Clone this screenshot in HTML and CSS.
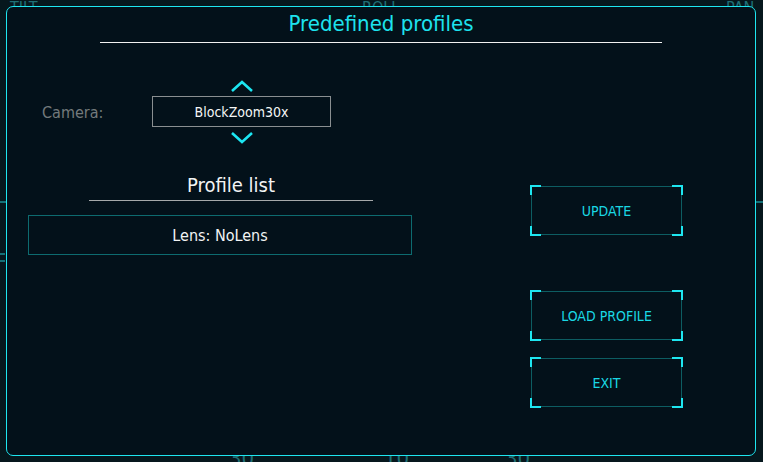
FILE: index.html
```html
<!DOCTYPE html>
<html>
<head>
<meta charset="utf-8">
<link rel="stylesheet" href="styles.css">
</head>
<body>
<div class="hud">
  <span class="hud-text tilt">TILT</span>
  <span class="hud-text roll">ROLL</span>
  <span class="hud-text pan">PAN</span>
  <span class="hud-num n1">30</span>
  <span class="hud-num n2">10</span>
  <span class="hud-num n3">30</span>
  <span class="hud-bar bl1"></span>
  <span class="hud-bar bl2"></span>
  <span class="hud-bar bl3"></span>
  <span class="hud-bar br1"></span>
</div>
<div class="dialog">
  <div class="header">
    <div class="title">Predefined profiles</div>
    <div class="title-rule"></div>
  </div>
  <div class="content">
    <div class="left">
      <div class="camera-row">
        <div class="camera-label">Camera:</div>
        <div class="picker">
          <svg class="chev" width="24" height="12" viewBox="0 0 24 12"><polyline points="2,11 12,2 22,11" fill="none" stroke="#1ce6f2" stroke-width="2.6"/></svg>
          <div class="picker-box">BlockZoom30x</div>
          <svg class="chev" width="24" height="13" viewBox="0 0 24 13"><polyline points="2,2 12,11 22,2" fill="none" stroke="#1ce6f2" stroke-width="2.6"/></svg>
        </div>
      </div>
      <div class="list-head">
        <div class="list-title">Profile list</div>
        <div class="list-rule"></div>
      </div>
      <div class="list-item">Lens: NoLens</div>
    </div>
    <div class="right">
      <div class="btn b-update"><span class="c tl"></span><span class="c tr"></span><span class="c bl"></span><span class="c br"></span>UPDATE</div>
      <div class="btn b-load"><span class="c tl"></span><span class="c tr"></span><span class="c bl"></span><span class="c br"></span>LOAD PROFILE</div>
      <div class="btn b-exit"><span class="c tl"></span><span class="c tr"></span><span class="c bl"></span><span class="c br"></span>EXIT</div>
    </div>
  </div>
</div>
</body>
</html>
```
FILE: styles.css
```css
html, body {
  margin: 0;
  padding: 0;
}
body {
  width: 763px;
  height: 462px;
  overflow: hidden;
  background: #06171d;
  font-family: "DejaVu Sans", sans-serif;
  font-stretch: condensed;
  position: relative;
}
.hud-text, .hud-num {
  position: absolute;
  color: #1f6f75;
  font-size: 16px;
  line-height: 16px;
}
.tilt { left: 10px; top: 0; }
.roll { left: 362px; top: 0; }
.pan { left: 726px; top: 0; }
.hud-num { font-size: 22px; line-height: 22px; top: 448px; }
.n1 { left: 229px; }
.n2 { left: 384px; }
.n3 { left: 505px; }
.hud-bar {
  position: absolute;
  background: #157077;
  height: 2px;
}
.bl1 { left: 0; width: 6px; top: 201px; }
.bl2 { left: 0; width: 5px; top: 253px; }
.bl3 { left: 0; width: 5px; top: 260px; }
.br1 { left: 756px; width: 7px; top: 201px; }

.dialog {
  position: relative;
  margin: 6px 0 0 6px;
  width: 748px;
  height: 448px;
  border: 1px solid #1ee6f0;
  border-radius: 7px;
  background: #03111a;
  display: flex;
  flex-direction: column;
}
.header {
  display: flex;
  flex-direction: column;
  align-items: center;
  padding-top: 4px;
}
.title {
  color: #1de3ee;
  font-size: 22px;
  line-height: 26px;
}
.title-rule {
  margin-top: 5px;
  width: 562px;
  height: 1px;
  background: #f2f2f2;
}
.content {
  display: flex;
  padding-left: 21px;
}
.left {
  width: 385px;
  display: flex;
  flex-direction: column;
}
.camera-row {
  display: flex;
  align-items: center;
  margin-top: 37px;
}
.camera-label {
  width: 110px;
  padding-left: 14px;
  color: #737a7c;
  font-size: 16px;
}
.picker {
  display: flex;
  flex-direction: column;
  align-items: center;
}
.chev { display: block; }
.picker-box {
  margin: 4px 0 4px;
  width: 177px;
  height: 29px;
  border: 1px solid #8a8f91;
  display: flex;
  align-items: center;
  justify-content: center;
  color: #f4f6f6;
  font-size: 14px;
}
.list-head {
  margin-left: 61px;
  width: 284px;
  display: flex;
  flex-direction: column;
  align-items: center;
  margin-top: 29px;
}
.list-title {
  color: #f2f4f4;
  font-size: 20px;
  line-height: 24px;
}
.list-rule {
  margin-top: 3px;
  width: 284px;
  height: 1px;
  background: #a6a9aa;
}
.list-item {
  margin-top: 14px;
  width: 382px;
  height: 38px;
  border: 1px solid #0d6b70;
  display: flex;
  align-items: center;
  justify-content: center;
  color: #f2f4f4;
  font-size: 16px;
}
.right {
  margin-left: 116px;
  padding-top: 141px;
  display: flex;
  flex-direction: column;
}
.btn {
  position: relative;
  width: 151px;
  height: 49px;
  margin: 2px;
  border: 1px solid #0d5d62;
  display: flex;
  align-items: center;
  justify-content: center;
  color: #1ad8e4;
  font-size: 14px;
  box-sizing: border-box;
}
.b-load { margin-top: 54px; }
.b-exit { margin-top: 16px; }
.c {
  position: absolute;
  width: 9px;
  height: 8px;
  border-color: #1ee6f0;
  border-style: solid;
  border-width: 0;
}
.tl { left: -2px; top: -2px; border-top-width: 2px; border-left-width: 2px; }
.tr { right: -2px; top: -2px; border-top-width: 2px; border-right-width: 2px; }
.bl { left: -2px; bottom: -2px; border-bottom-width: 2px; border-left-width: 2px; }
.br { right: -2px; bottom: -2px; border-bottom-width: 2px; border-right-width: 2px; }
```
